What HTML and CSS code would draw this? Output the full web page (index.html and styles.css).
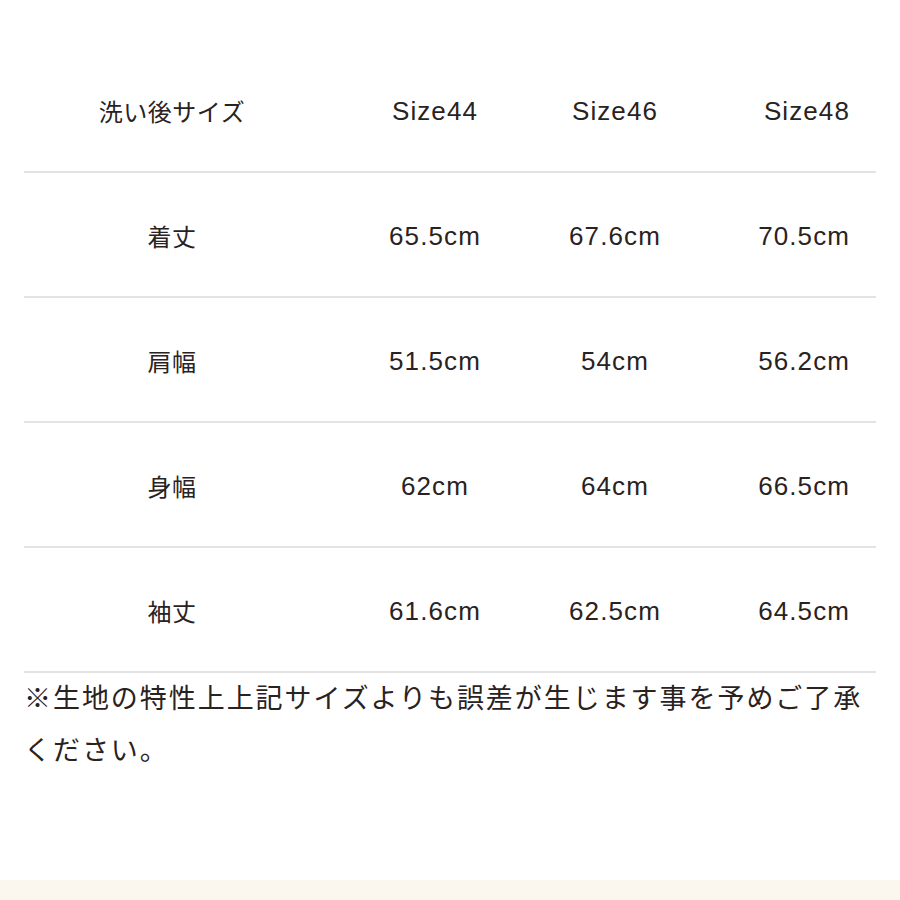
FILE: index.html
```html
<!DOCTYPE html>
<html lang="ja">
<head>
<meta charset="utf-8">
<link rel="stylesheet" href="styles.css">
</head>
<body>
<div class="page">
  <div class="table">
    <div class="row head">
      <div class="c c1">洗い後サイズ</div>
      <div class="c c2">Size44</div>
      <div class="c c3">Size46</div>
      <div class="c c4">Size48</div>
    </div>
    <div class="row">
      <div class="c c1">着丈</div>
      <div class="c c2">65.5cm</div>
      <div class="c c3">67.6cm</div>
      <div class="c c4">70.5cm</div>
    </div>
    <div class="row">
      <div class="c c1">肩幅</div>
      <div class="c c2">51.5cm</div>
      <div class="c c3">54cm</div>
      <div class="c c4">56.2cm</div>
    </div>
    <div class="row">
      <div class="c c1">身幅</div>
      <div class="c c2">62cm</div>
      <div class="c c3">64cm</div>
      <div class="c c4">66.5cm</div>
    </div>
    <div class="row">
      <div class="c c1">袖丈</div>
      <div class="c c2">61.6cm</div>
      <div class="c c3">62.5cm</div>
      <div class="c c4">64.5cm</div>
    </div>
  </div>
  <p class="note">※生地の特性上上記サイズよりも誤差が生じます事を予めご了承ください。</p>
</div>
<div class="band"></div>
</body>
</html>
```

FILE: styles.css
```css
html, body {
  margin: 0;
  padding: 0;
  background: #ffffff;
}
body {
  width: 900px;
  height: 900px;
  overflow: hidden;
  display: flex;
  flex-direction: column;
  font-family: "Liberation Sans", "Noto Sans CJK JP", sans-serif;
  color: #2a221e;
}
.page {
  flex: 1;
  padding: 48px 24px 0 24px;
}
.table {
  display: flex;
  flex-direction: column;
}
.row {
  display: grid;
  grid-template-columns: 296px 230px 130px 196px;
  height: 123px;
  align-items: center;
  border-bottom: 2px solid #e3e3e3;
  font-size: 26px;
  letter-spacing: 1.1px;
}
.c { text-align: center; padding-top: 4px; }
.c1 { font-family: "Noto Sans CJK JP", sans-serif; font-size: 24px; letter-spacing: 0.5px; padding-top: 2px; }
.c4 { text-align: right; padding-right: 26px; }
.note {
  margin: -2px 0 0 0;
  font-family: "Noto Sans CJK JP", sans-serif;
  font-size: 27px;
  line-height: 52px;
  letter-spacing: 1.95px;
  width: 850px;
}
.band {
  height: 20px;
  background: #fcf7ee;
}
```
